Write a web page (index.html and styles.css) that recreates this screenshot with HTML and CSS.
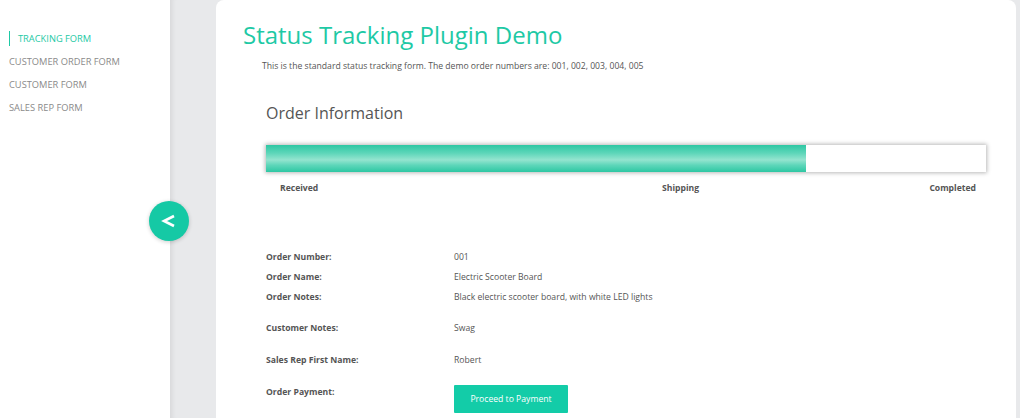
FILE: index.html
```html
<!DOCTYPE html>
<html>
<head>
<meta charset="utf-8">
<link rel="stylesheet" href="styles.css">
</head>
<body>
<div class="page">
  <nav class="sidebar">
    <a class="nav-item active">TRACKING FORM</a>
    <a class="nav-item">CUSTOMER ORDER FORM</a>
    <a class="nav-item">CUSTOMER FORM</a>
    <a class="nav-item">SALES REP FORM</a>
  </nav>
  <main class="main">
    <div class="card">
      <h1 class="title">Status Tracking Plugin Demo</h1>
      <p class="intro">This is the standard status tracking form. The demo order numbers are: 001, 002, 003, 004, 005</p>
      <section class="order">
        <h2 class="order-heading">Order Information</h2>
        <div class="progress"><div class="progress-fill" style="width:75%"></div></div>
        <div class="steps">
          <span class="step-first">Received</span>
          <span>Shipping</span>
          <span class="step-last">Completed</span>
        </div>
        <div class="fields">
          <div class="field"><span class="label">Order Number:</span><span class="value">001</span></div>
          <div class="field"><span class="label">Order Name:</span><span class="value">Electric Scooter Board</span></div>
          <div class="field"><span class="label">Order Notes:</span><span class="value">Black electric scooter board, with white LED lights</span></div>
          <div class="field gap first-gap"><span class="label">Customer Notes:</span><span class="value">Swag</span></div>
          <div class="field gap"><span class="label">Sales Rep First Name:</span><span class="value">Robert</span></div>
          <div class="field gap"><span class="label">Order Payment:</span><span class="value"><button class="pay">Proceed to Payment</button></span></div>
        </div>
      </section>
    </div>
  </main>
  <button class="toggle" aria-label="Collapse">
    <svg width="16" height="14" viewBox="0 0 16 14"><path d="M13 2 L3 7 L13 12" fill="none" stroke="#fff" stroke-width="2.6" stroke-linejoin="miter" stroke-linecap="butt"/></svg>
  </button>
</div>
</body>
</html>
```
FILE: styles.css
```css
html, body {
  margin: 0;
  padding: 0;
  height: 100%;
  overflow: hidden;
}
body {
  font-family: "Open Sans", "Liberation Sans", sans-serif;
  color: #555;
  background: #fff;
}
.page {
  display: flex;
  height: 418px;
  position: relative;
}
.sidebar {
  width: 170px;
  flex: none;
  background: #fff;
  padding-top: 31px;
  box-sizing: border-box;
  display: flex;
  flex-direction: column;
}
.nav-item {
  display: block;
  font-size: 9.3px;
  color: #8a8a8a;
  line-height: 15px;
  height: 15px;
  margin-bottom: 8px;
  padding-left: 9px;
}
.nav-item.active {
  color: #1ec9a5;
  border-left: 1px solid #1ec9a5;
  margin-left: 9px;
  padding-left: 8px;
}
.main {
  flex: 1;
  background: #e8e9eb;
  box-shadow: inset 6px 0 5px -4px rgba(0,0,0,0.08);
  padding: 0 4px 0 46px;
  box-sizing: border-box;
}
.card {
  background: #fff;
  border-radius: 8px 8px 0 0;
  height: 100%;
  padding: 19px 30px 0 27px;
  box-sizing: border-box;
}
.title {
  margin: 0;
  font-size: 24px;
  font-weight: 400;
  color: #1ec9a5;
  line-height: 32px;
}
.intro {
  margin: 9px 0 0 19px;
  font-size: 8.65px;
  line-height: 12px;
  color: #555;
}
.order {
  padding-left: 23px;
}
.order-heading {
  margin: 29px 0 0;
  font-size: 16px;
  font-weight: 400;
  color: #555;
  line-height: 24px;
}
.progress {
  margin-top: 20px;
  height: 27px;
  background: #fff;
  box-shadow: 0 0 4px 1px rgba(0,0,0,0.28);
}
.progress-fill {
  height: 100%;
  background: linear-gradient(to bottom, #2ec7a3 0%, #5dd6b9 30%, #94e4cf 55%, #5dd6b9 75%, #2ec7a3 100%);
}
.steps {
  display: flex;
  padding: 0 10px 0 14px;
  margin-top: 10px;
  font-size: 8.6px;
  font-weight: 700;
  line-height: 12px;
  color: #555;
}
.step-first {
  width: 382px;
  flex: none;
}
.step-last {
  margin-left: auto;
}
.fields {
  margin-top: 57px;
  font-size: 8.65px;
  line-height: 12px;
}
.field {
  display: flex;
  margin-bottom: 8px;
}
.field.gap {
  padding-top: 12px;
}
.field.first-gap {
  padding-top: 11px;
}
.label {
  width: 188px;
  flex: none;
  font-weight: 700;
  color: #555;
}
.value {
  color: #555;
}
.pay {
  margin-top: -1px;
  background: #13cca8;
  color: #fff;
  border: none;
  border-radius: 1px;
  font-family: inherit;
  font-size: 8.65px;
  width: 114px;
  height: 28px;
  padding: 0;
}
.toggle {
  position: absolute;
  left: 149px;
  top: 201px;
  width: 40px;
  height: 40px;
  border-radius: 50%;
  border: none;
  background: #15c9a5;
  box-shadow: 0 1px 4px rgba(0,0,0,0.2);
  display: flex;
  align-items: center;
  justify-content: center;
  padding: 0;
}
.toggle svg {
  display: block;
}
```
